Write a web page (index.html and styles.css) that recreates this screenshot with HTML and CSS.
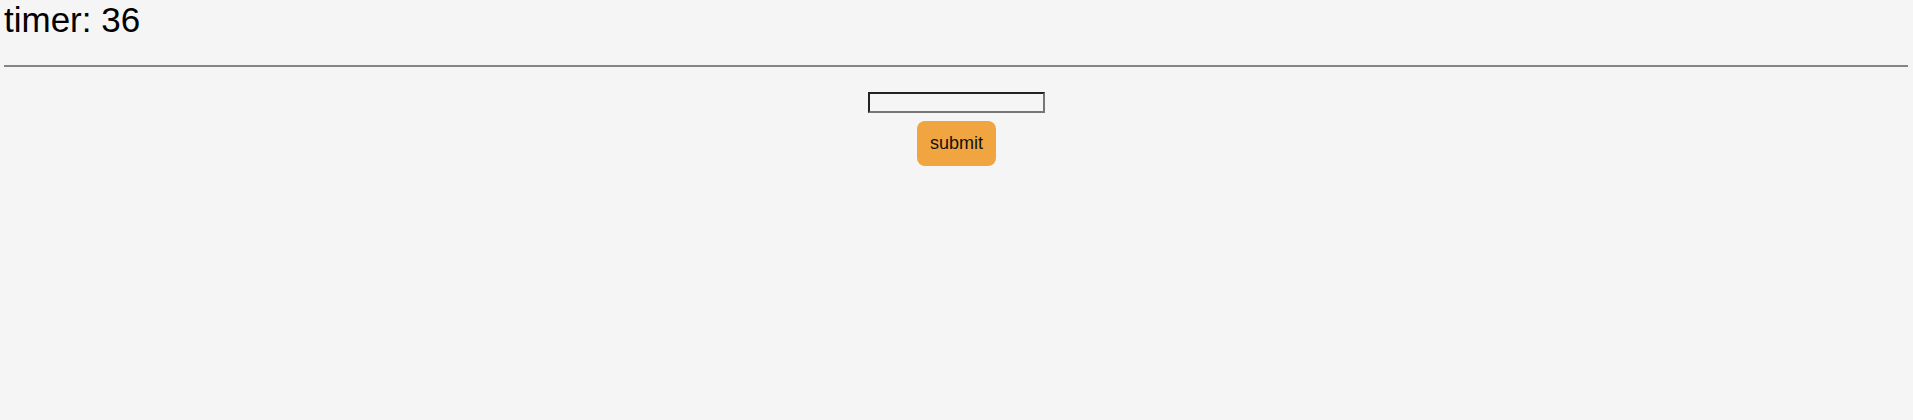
FILE: index.html
```html
<!DOCTYPE html>
<html>
<head>
<meta charset="utf-8">
<link rel="stylesheet" href="styles.css">
</head>
<body>
<div class="timer">timer: 36</div>
<hr class="rule">
<form class="form">
  <input class="field" type="text">
  <button class="submit" type="button">submit</button>
</form>
</body>
</html>
```
FILE: styles.css
```css
html, body {
  margin: 0;
  background: #f5f5f5;
}
body {
  padding: 0 4px;
  font-family: "Liberation Sans", Arial, sans-serif;
  color: #000;
}
.timer {
  font-size: 35px;
  line-height: 40px;
  padding-left: 0;
}
.rule {
  margin: 25px 1px 25px 0;
  border: 0;
  border-top: 2px solid #858585;
  height: 0;
}
.form {
  display: flex;
  flex-direction: column;
  align-items: center;
  gap: 8px;
  margin: 0;
}
.field {
  box-sizing: border-box;
  width: 177px;
  height: 21px;
  margin: 0;
  padding: 0 2px;
  background: #f5f5f5;
  border-style: solid;
  border-width: 2px;
  border-color: #222 #767676 #767676 #222;
  outline: none;
}
.submit {
  box-sizing: border-box;
  width: 79px;
  height: 45px;
  padding: 0;
  margin: 0;
  border: 0;
  border-radius: 8px;
  background: #f0a540;
  color: #111;
  font-family: "Liberation Sans", Arial, sans-serif;
  font-size: 18px;
  line-height: 21px;
}
```
